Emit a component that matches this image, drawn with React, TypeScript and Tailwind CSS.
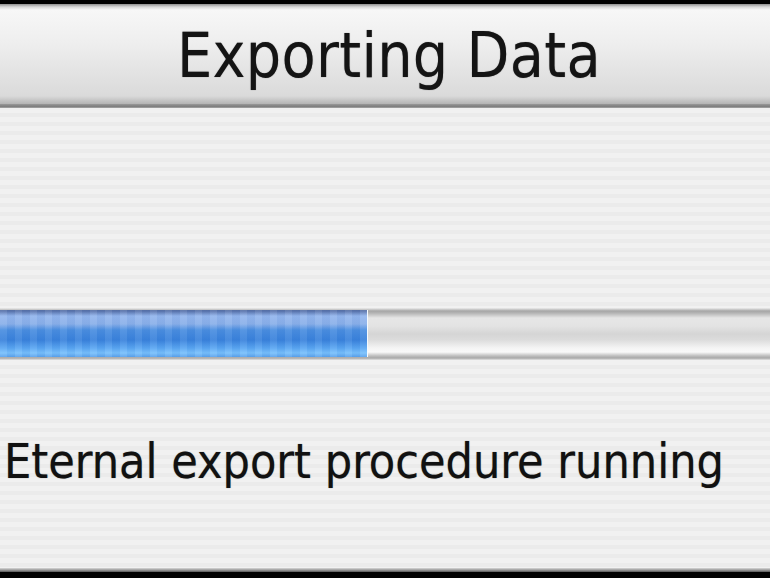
export default function App() {
  return (
    <div
      className="flex h-[578px] w-[770px] flex-col overflow-hidden bg-black"
      style={{ fontFamily: '"DejaVu Sans Condensed", "DejaVu Sans", sans-serif' }}
    >
      {/* window top edge */}
      <div className="h-[4px] shrink-0 bg-black" />

      {/* title bar */}
      <div className="flex h-[100px] shrink-0 items-start justify-center bg-[linear-gradient(to_bottom,#8e8e8e_0px,#d8d8d8_3px,#f7f7f7_6px,#eeeeee_40px,#dadada_92px,#b4b4b4_100px)] pt-[21px]">
        <h1 className="pl-[8px] text-[62px] leading-none font-normal tracking-[0.3px] text-[#141414] [text-shadow:0_0_1px_rgba(0,0,0,0.5)]">
          Exporting Data
        </h1>
      </div>
      <div className="h-[4px] shrink-0 bg-[linear-gradient(to_bottom,#9a9a9a,#7e7e7e_60%,#a8a8a8)]" />

      {/* body with pinstripes */}
      <div className="flex flex-1 flex-col bg-[repeating-linear-gradient(to_bottom,#f1f1f1_0px,#f1f1f1_5px,#ebebeb_5px,#ebebeb_9px)]">
        {/* progress bar */}
        <div className="relative mt-[200px] h-[52px] w-full bg-[linear-gradient(to_bottom,#ececec_0px,#a6a6a6_3px,#b4b4b4_5px,#e6e6e6_10px,#e3e3e3_18px,#d5d5d5_26px,#dcdcdc_32px,#f4f4f4_40px,#fafafa_44px,#bdbdbd_48px,#a9a9a9_50px,#e4e4e4_52px)]">
          <div className="absolute top-[2px] left-0 h-[47px] w-[367px] bg-[linear-gradient(to_bottom,#5a74a8_0px,#5872aa_1px,#93b6ee_6px,#8ab0ea_14px,#4a8ee0_20px,#3a82dc_30px,#5aa6f2_38px,#78c0fc_43px,#5aa2ec_47px)] shadow-[1px_0_0_#f4faff]">
            <div className="h-full w-full bg-[repeating-linear-gradient(to_right,rgba(255,255,255,0.07)_0px,rgba(255,255,255,0.07)_7px,rgba(0,40,120,0.03)_7px,rgba(0,40,120,0.03)_15px)]" />
          </div>
        </div>

        {/* status text */}
        <p className="mt-[77px] pl-[4px] text-[48px] leading-none whitespace-nowrap text-[#111111] [text-shadow:0_0_1px_rgba(0,0,0,0.5)]">
          Eternal export procedure running
        </p>
      </div>

      {/* window bottom edge */}
      <div className="h-[4px] shrink-0 bg-[linear-gradient(to_bottom,#d8d8d8,#9c9c9c_50%,#555555)]" />
      <div className="h-[6px] shrink-0 bg-black" />
    </div>
  )
}
